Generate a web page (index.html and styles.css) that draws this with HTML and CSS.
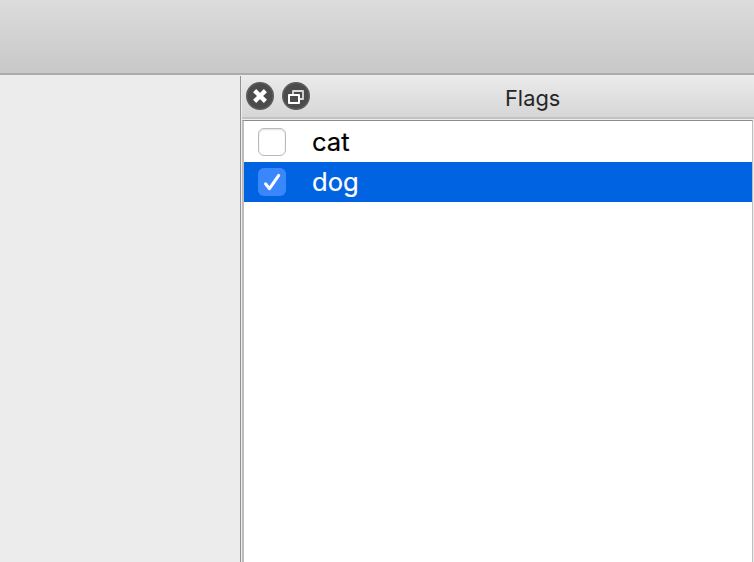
FILE: index.html
```html
<!DOCTYPE html>
<html lang="en">
<head>
<meta charset="utf-8">
<title>Flags</title>
<link rel="stylesheet" href="styles.css">
</head>
<body>
<div class="toolbar"></div>
<main class="workspace">
  <div class="canvas"></div>
  <section class="dock">
    <header class="dock-header">
      <div class="dock-buttons">
        <svg width="28" height="28" viewBox="0 0 28 28">
          <circle cx="14" cy="14" r="13.2" fill="#4b4b4b" stroke="#5c5c5c" stroke-width="1.6"/>
          <path d="M8.6 8.6l10.8 10.8M19.4 8.6l-10.8 10.8" stroke="#fff" stroke-width="4.4"/>
        </svg>
        <svg width="28" height="28" viewBox="0 0 28 28">
          <circle cx="14" cy="14" r="13.2" fill="#4b4b4b" stroke="#5c5c5c" stroke-width="1.6"/>
          <path d="M11 12V9h10v8h-3" fill="none" stroke="#dcdcdc" stroke-width="1.8" stroke-linejoin="round"/>
          <path d="M7 13h10v8H7z" fill="#4b4b4b" stroke="#fff" stroke-width="2" stroke-linejoin="round"/>
        </svg>
      </div>
      <span class="title">Flags</span>
    </header>
    <div class="list">
      <div class="row"><span class="box"></span><span class="label">cat</span></div>
      <div class="row selected">
        <span class="box"><svg width="28" height="28" viewBox="0 0 28 28"><path d="M7.5 15.8l4 4.9L20.7 7.4" fill="none" stroke="#fff" stroke-width="3" stroke-linecap="round" stroke-linejoin="round"/></svg></span>
        <span class="label">dog</span>
      </div>
    </div>
  </section>
</main>
</body>
</html>
```
FILE: styles.css
```css
* { box-sizing: border-box; }
body {
  margin: 0;
  height: 562px;
  display: flex;
  flex-direction: column;
  overflow: hidden;
  background: #ececec;
  font-family: Inter, sans-serif;
}
svg { display: block; }
.toolbar {
  height: 75px;
  flex: none;
  background: linear-gradient(#dcdcdc, #c8c8c8);
  border-bottom: 2px solid #acacac;
}
.workspace {
  flex: 1;
  min-height: 0;
  display: flex;
  padding-top: 1px;
}
.canvas {
  width: 241px;
  flex: none;
  border-right: 1px solid #929292;
}
.dock {
  flex: 1;
  display: flex;
  flex-direction: column;
  padding-left: 1px;
}
.dock-header {
  height: 43px;
  flex: none;
  display: grid;
  grid-template-columns: 68px 1fr;
  padding: 6px 0 0 4px;
  background: linear-gradient(#ebebeb, #d6d6d6);
  border-bottom: 2px solid #c3c3c3;
}
.dock-buttons {
  display: flex;
  gap: 8px;
}
.title {
  padding: 2px 0 0 191px;
  font-size: 21.8px;
  line-height: 28px;
  color: #262626;
}
.list {
  flex: 1;
  margin: 1px 1px 0 0;
  padding-top: 1px;
  border: solid #bdbdbd;
  border-width: 1px 1px 0 2px;
  border-top-color: #8c8c8c;
  background: #fff;
}
.row {
  height: 40px;
  display: flex;
  align-items: center;
  padding-left: 14px;
  color: #000;
}
.row.selected {
  background: #0063e1;
  color: #fff;
}
.box {
  width: 28px;
  height: 28px;
  border: 1px solid #b9b9b9;
  border-radius: 6px;
  background: #fff;
  box-shadow: inset 0 1px 2px #e0e0e0;
}
.selected .box {
  border: 0;
  background: #3a87fd;
  box-shadow: none;
}
.label {
  margin-left: 26px;
  font-size: 25.6px;
  line-height: 40px;
  -webkit-text-stroke: 0.2px;
}
```
